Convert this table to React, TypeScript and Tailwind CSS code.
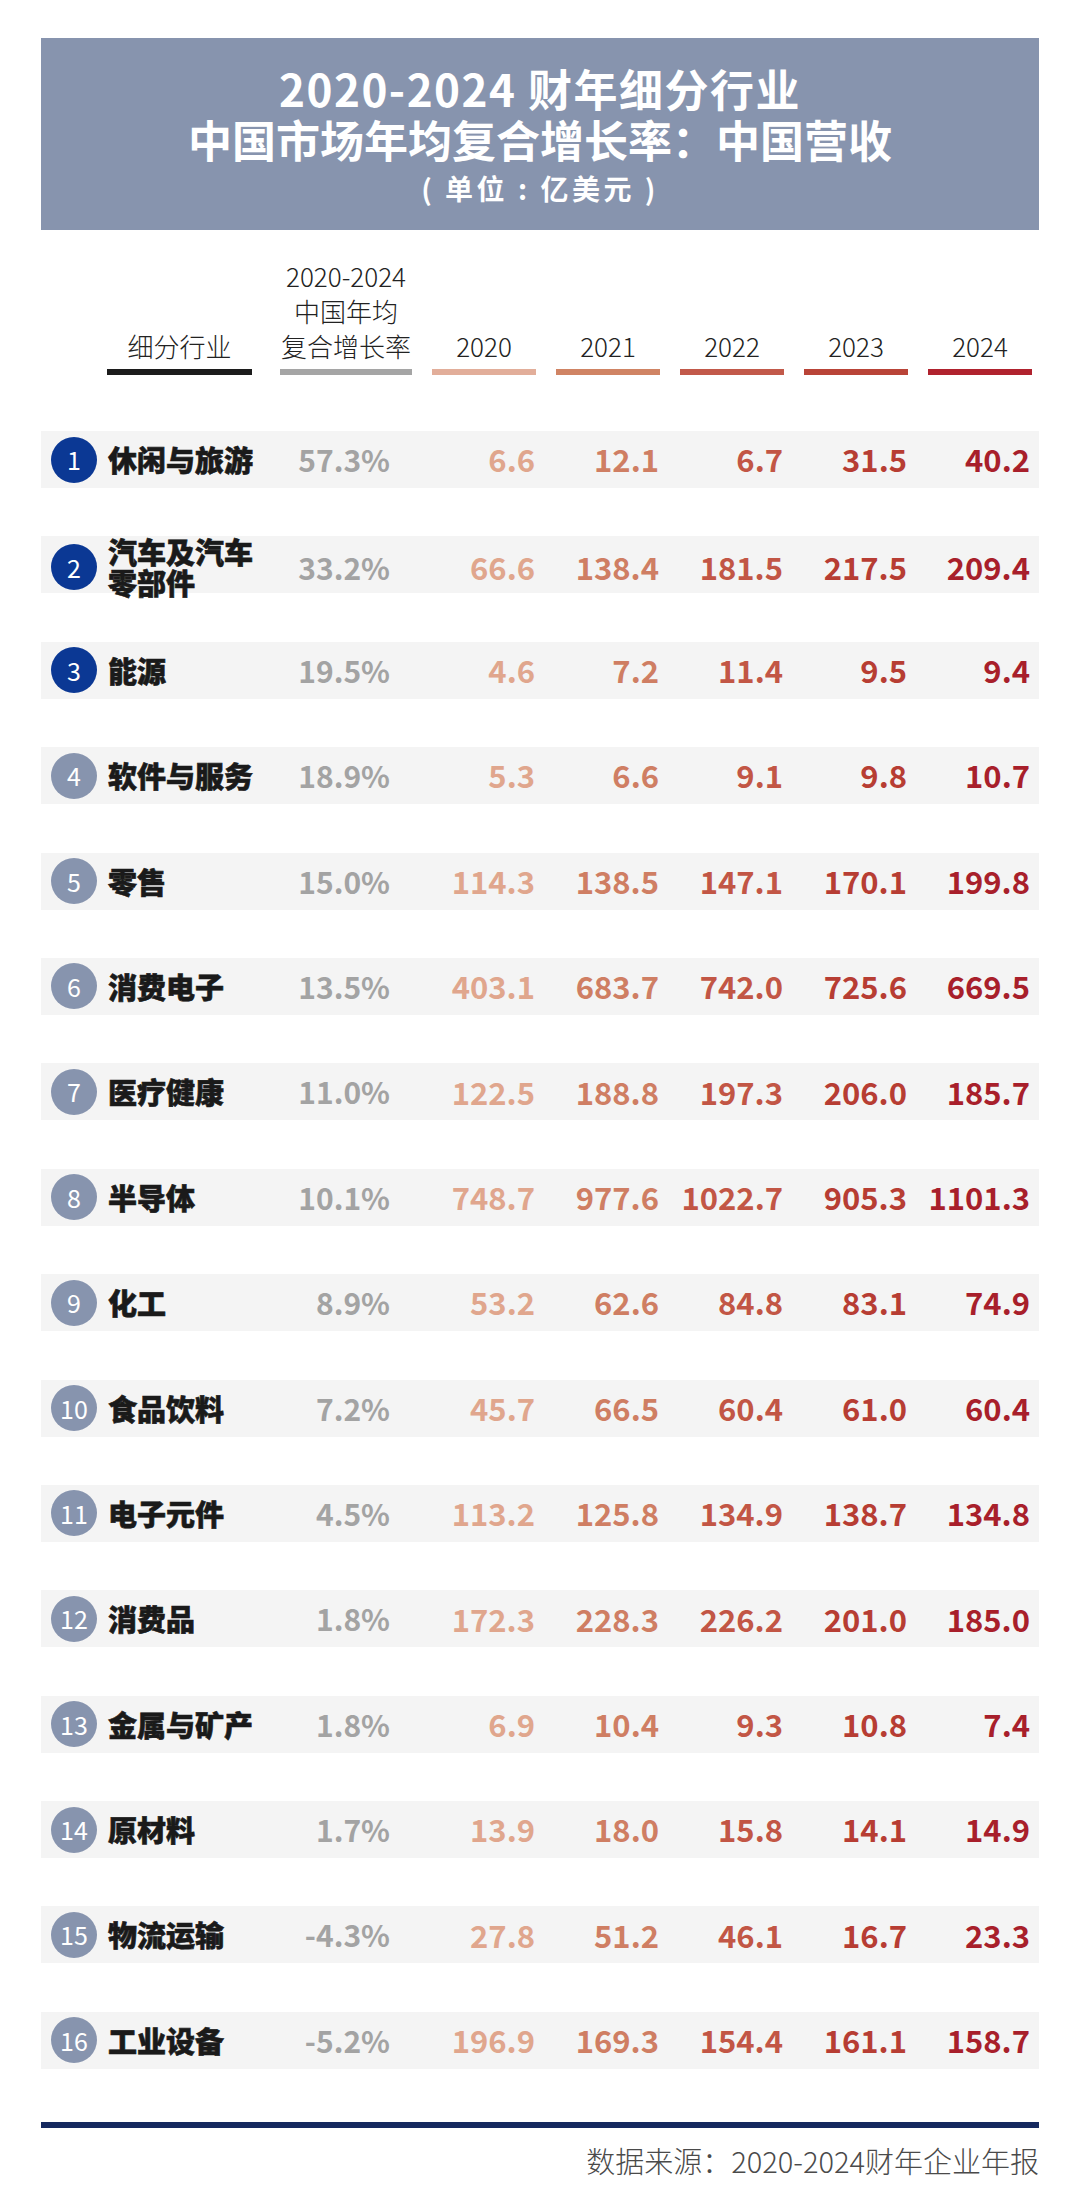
const cjk = { fontFamily: '"Noto Sans CJK SC", "Noto Sans", sans-serif' }

const cols = 'grid grid-cols-[229px_152px_124px_124px_124px_124px_121px]'

const yearColors = ['text-[#e0a68d]', 'text-[#cf7e63]', 'text-[#c25645]', 'text-[#b73d33]', 'text-[#a81f2b]']

const rows: [string, string, string[]][] = [
  ['休闲与旅游', '57.3%', ['6.6', '12.1', '6.7', '31.5', '40.2']],
  ['汽车及汽车\n零部件', '33.2%', ['66.6', '138.4', '181.5', '217.5', '209.4']],
  ['能源', '19.5%', ['4.6', '7.2', '11.4', '9.5', '9.4']],
  ['软件与服务', '18.9%', ['5.3', '6.6', '9.1', '9.8', '10.7']],
  ['零售', '15.0%', ['114.3', '138.5', '147.1', '170.1', '199.8']],
  ['消费电子', '13.5%', ['403.1', '683.7', '742.0', '725.6', '669.5']],
  ['医疗健康', '11.0%', ['122.5', '188.8', '197.3', '206.0', '185.7']],
  ['半导体', '10.1%', ['748.7', '977.6', '1022.7', '905.3', '1101.3']],
  ['化工', '8.9%', ['53.2', '62.6', '84.8', '83.1', '74.9']],
  ['食品饮料', '7.2%', ['45.7', '66.5', '60.4', '61.0', '60.4']],
  ['电子元件', '4.5%', ['113.2', '125.8', '134.9', '138.7', '134.8']],
  ['消费品', '1.8%', ['172.3', '228.3', '226.2', '201.0', '185.0']],
  ['金属与矿产', '1.8%', ['6.9', '10.4', '9.3', '10.8', '7.4']],
  ['原材料', '1.7%', ['13.9', '18.0', '15.8', '14.1', '14.9']],
  ['物流运输', '-4.3%', ['27.8', '51.2', '46.1', '16.7', '23.3']],
  ['工业设备', '-5.2%', ['196.9', '169.3', '154.4', '161.1', '158.7']],
]

function HeaderCell({ lines, bar, width }: { lines: string[]; bar: string; width: string }) {
  return (
    <div className="flex items-end">
      <div className={`ml-[10px] flex flex-col items-center ${width}`}>
        <div className="text-center text-[26px] font-light leading-[35px] text-[#222]">
          {lines.map((l) => (
            <div key={l} className="whitespace-nowrap">{l}</div>
          ))}
        </div>
        <div className={`mt-[6px] h-[6px] w-full ${bar}`} />
      </div>
    </div>
  )
}

export default function App() {
  return (
    <div className="min-h-[2210px] w-[1080px] bg-white px-[41px] pt-[38px]" style={cjk}>
      <div className="flex h-[192px] flex-col items-center bg-[#8794ae] pt-[25px] text-center font-bold text-white">
        <div className="h-[51px] text-[44px] leading-[51px] tracking-[1.5px]">2020-2024 财年细分行业</div>
        <div className="h-[51px] text-[44px] leading-[51px]">中国市场年均复合增长率：中国营收</div>
        <div className="text-[28px] leading-[46px] tracking-[3.5px]">( 单位 : 亿美元 )</div>
      </div>

      <div className={`${cols} mt-[28px]`}>
        <div className="flex items-end">
          <div className="ml-[66px] flex w-[145px] flex-col items-center">
            <div className="text-[26px] font-light leading-[35px] text-[#222]">细分行业</div>
            <div className="mt-[6px] h-[6px] w-full bg-[#1c1c1c]" />
          </div>
        </div>
        <HeaderCell lines={['2020-2024', '中国年均', '复合增长率']} bar="bg-[#a5a5a5]" width="w-[132px]" />
        <HeaderCell lines={['2020']} bar="bg-[#e2ae9a]" width="w-[104px]" />
        <HeaderCell lines={['2021']} bar="bg-[#d08464]" width="w-[104px]" />
        <HeaderCell lines={['2022']} bar="bg-[#c2594a]" width="w-[104px]" />
        <HeaderCell lines={['2023']} bar="bg-[#b94438]" width="w-[104px]" />
        <HeaderCell lines={['2024']} bar="bg-[#b0222e]" width="w-[104px]" />
      </div>

      <div className="mt-[56px] flex flex-col gap-[48.4px]">
        {rows.map(([name, pct, vals], i) => (
          <div key={i} className={`${cols} h-[57px] items-center bg-[#f4f4f4]`}>
            <div className="flex items-center">
              <div
                className={`ml-[10px] flex h-[46px] w-[46px] shrink-0 items-center justify-center rounded-full text-[25px] font-normal leading-none text-white ${
                  i < 3 ? 'bg-[#0b3894]' : 'bg-[#8794ae]'
                }`}
              >
                {i + 1}
              </div>
              <div className="ml-[11px] whitespace-pre text-[29px] font-black leading-[31px] text-[#1a1a1a] [-webkit-text-stroke:0.6px_#1a1a1a]">
                {name}
              </div>
            </div>
            <div className="pr-[32px] text-right text-[30px] font-bold text-[#a3a3a3]">{pct}</div>
            {vals.map((v, j) => (
              <div
                key={j}
                className={`text-right text-[31px] font-bold ${yearColors[j]} ${j === 4 ? 'pr-[9px]' : 'pr-[11px]'}`}
              >
                {v}
              </div>
            ))}
          </div>
        ))}
      </div>

      <div className="mt-[53px] h-[6px] bg-[#15295f]" />
      <div className="mt-[14px] text-right text-[29px] font-light leading-[36px] text-[#4a4a4a]">
        数据来源：2020-2024财年企业年报
      </div>
    </div>
  )
}
